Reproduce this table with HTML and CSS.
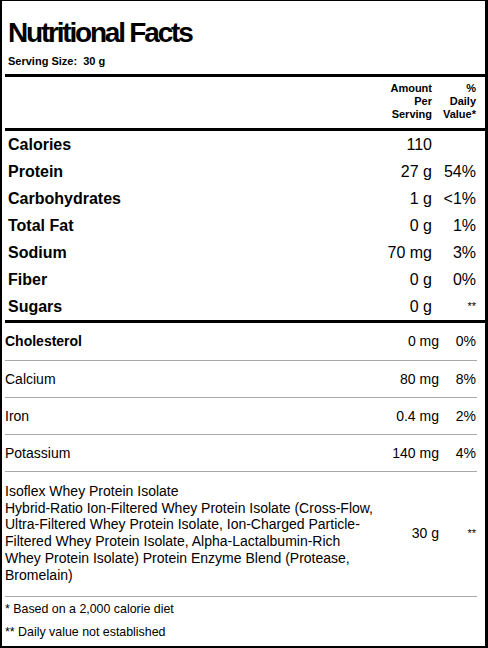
FILE: index.html
```html
<!DOCTYPE html>
<html>
<head>
<meta charset="utf-8">
<link rel="stylesheet" href="styles.css">
</head>
<body>
<div class="label">
  <h1 class="title">Nutritional Facts</h1>
  <p class="serving">Serving Size:&nbsp; 30 g</p>
  <div class="rule"></div>
  <div class="head-row">
    <span></span>
    <span class="amt">Amount<br>Per<br>Serving</span>
    <span class="dv">%<br>Daily<br>Value*</span>
  </div>
  <div class="rule rule-gap"></div>
  <div class="main">
    <div class="main-row"><span class="name">Calories</span><span class="amt">110</span><span class="dv"></span></div>
    <div class="main-row"><span class="name">Protein</span><span class="amt">27 g</span><span class="dv">54%</span></div>
    <div class="main-row"><span class="name">Carbohydrates</span><span class="amt">1 g</span><span class="dv">&lt;1%</span></div>
    <div class="main-row"><span class="name">Total Fat</span><span class="amt">0 g</span><span class="dv">1%</span></div>
    <div class="main-row"><span class="name">Sodium</span><span class="amt">70 mg</span><span class="dv">3%</span></div>
    <div class="main-row"><span class="name">Fiber</span><span class="amt">0 g</span><span class="dv">0%</span></div>
    <div class="main-row"><span class="name">Sugars</span><span class="amt">0 g</span><span class="dv star">**</span></div>
  </div>
  <div class="rule rule-flush"></div>
  <div class="sub">
    <div class="sub-row"><span class="name bold">Cholesterol</span><span class="amt">0 mg</span><span class="dv">0%</span></div>
    <div class="sub-row"><span class="name">Calcium</span><span class="amt">80 mg</span><span class="dv">8%</span></div>
    <div class="sub-row"><span class="name">Iron</span><span class="amt">0.4 mg</span><span class="dv">2%</span></div>
    <div class="sub-row"><span class="name">Potassium</span><span class="amt">140 mg</span><span class="dv">4%</span></div>
    <div class="sub-row ingr"><span class="name">Isoflex Whey Protein Isolate<br>Hybrid-Ratio Ion-Filtered Whey Protein Isolate (Cross-Flow, Ultra-Filtered Whey Protein Isolate, Ion-Charged Particle-Filtered Whey Protein Isolate, Alpha-Lactalbumin-Rich Whey Protein Isolate) Protein Enzyme Blend (Protease, Bromelain)</span><span class="amt">30 g</span><span class="dv star">**</span></div>
  </div>
  <div class="notes">
    <p>* Based on a 2,000 calorie diet</p>
    <p>** Daily value not established</p>
  </div>
</div>
</body>
</html>
```
FILE: styles.css
```css
html, body {
  margin: 0;
  padding: 0;
  background: #fff;
}

body {
  font-family: "Liberation Sans", Arial, sans-serif;
  color: #000;
}

.label {
  box-sizing: border-box;
  width: 488px;
  height: 648px;
  border-style: solid;
  border-color: #000;
  border-width: 1px 3px 2px 2px;
  padding: 0 0 0 3px;
  overflow: hidden;
}

.title {
  margin: 16px 0 0;
  padding-left: 3px;
  font-size: 28px;
  line-height: 32px;
  font-weight: bold;
  letter-spacing: -2.2px;
}

.serving {
  margin: 6px 0 0;
  padding-left: 3px;
  font-size: 11px;
  line-height: 13px;
  font-weight: bold;
  white-space: pre;
}

.rule {
  height: 3px;
  background: #000;
  margin-top: 6px;
}

.rule-gap {
  margin-top: 7px;
}

.rule-flush {
  margin-top: 0;
}

.head-row,
.main-row {
  display: grid;
  grid-template-columns: 1fr 60px 44px;
  padding: 0 9px 0 3px;
}

.head-row {
  padding-top: 5px;
  font-size: 11px;
  line-height: 13px;
  font-weight: bold;
}

.amt,
.dv {
  text-align: right;
}

.main-row {
  height: 27px;
  align-items: center;
  font-size: 16px;
  line-height: 19px;
}

.main-row .name {
  font-weight: bold;
}

.star {
  font-size: 11px;
  align-self: center;
}

.sub {
  margin-right: 8px;
}

.sub-row {
  display: grid;
  grid-template-columns: 1fr 56px 38px;
  align-items: center;
  min-height: 36px;
  border-bottom: 1px solid #aaa;
  font-size: 14px;
  line-height: 16.7px;
}

.sub-row .dv {
  padding-right: 1px;
}

.sub-row:first-child {
  min-height: 37px;
}

.bold {
  font-weight: bold;
}

.ingr {
  padding: 11px 0 13px;
}

.ingr .name {
  padding-right: 8px;
}

.notes {
  padding-top: 5px;
  display: flex;
  flex-direction: column;
  gap: 8px;
}

.notes p {
  margin: 0;
  font-size: 12.4px;
  line-height: 15px;
}
```
